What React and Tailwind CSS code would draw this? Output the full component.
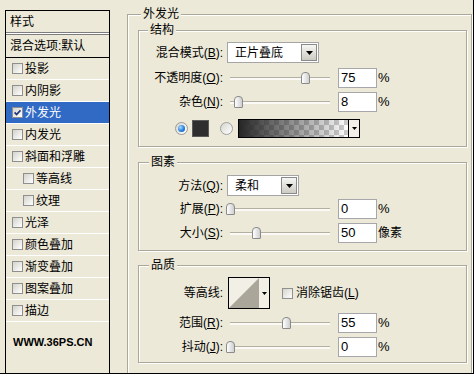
import React from "react";

function Cb({ checked }) {
  return (
    <span className="flex h-[11px] w-[11px] shrink-0 items-center justify-center border border-[#8f8f8f] bg-gradient-to-br from-[#d4d3cc] to-white">
      {checked ? (
        <svg width="7" height="7" viewBox="0 0 7 7">
          <path d="M0.6 3.4 L2.6 5.6 L6.5 1.2" fill="none" stroke="#22357a" strokeWidth="1.7" />
        </svg>
      ) : null}
    </span>
  );
}

function Tri({ w = 7, h = 4 }) {
  return (
    <svg width={w} height={h} viewBox={`0 0 ${w} ${h}`}>
      <polygon points={`0,0 ${w},0 ${w / 2},${h}`} fill="#000" />
    </svg>
  );
}

function Group({ title, className, titleClass, children }) {
  return (
    <div className={`relative border border-[#aca899] shadow-[inset_1px_1px_0_#fff,1px_1px_0_#fff] ${className}`}>
      <span className={`absolute -top-[8px] bg-[#ece9d8] px-[2px] text-[12px] leading-[14px] ${titleClass}`}>{title}</span>
      {children}
    </div>
  );
}

function Row({ label, className, children }) {
  return (
    <div className={`flex items-center ${className}`}>
      <span className="w-[84px] shrink-0 text-right text-[12px] leading-[14px]">{label}</span>
      {children}
    </div>
  );
}

function Slider({ pct }) {
  return (
    <div className="relative ml-[4px] h-[20px] w-[106px] shrink-0">
      <div className="absolute left-[3px] right-[3px] top-[9px] h-[3px] border-t border-[#b3b0a1] bg-[#fbfaf6]" />
      <div
        className="absolute top-[4px] h-[12px] w-[9px] rounded-t-[4px] rounded-b-[1px] border border-[#8a8a8a] bg-gradient-to-r from-white to-[#cfcfcf]"
        style={{ left: pct - 1 }}
      />
    </div>
  );
}

function Num({ v, unit }) {
  return (
    <>
      <div className="ml-[5px] flex h-[20px] w-[39px] shrink-0 items-center border border-[#a7a6aa] bg-white pl-[2px] text-[13px] leading-[14px]">
        {v}
      </div>
      <span className="ml-[1px] text-[13px] leading-[14px]">{unit}</span>
    </>
  );
}

function Select({ className, text }) {
  return (
    <div className={`ml-[4px] flex h-[21px] shrink-0 items-center justify-between border border-[#a5a5a5] bg-white ${className}`}>
      <span className="pl-[7px] text-[12px] leading-[14px]">{text}</span>
      <span className="mr-[1px] flex h-[17px] w-[16px] items-center justify-center border border-[#8a8a8a] bg-gradient-to-b from-[#f6f6f4] to-[#cdcbc2]">
        <Tri w={7} h={4} />
      </span>
    </div>
  );
}

const rows = [
  { t: "投影" },
  { t: "内阴影" },
  { t: "外发光", sel: true },
  { t: "内发光" },
  { t: "斜面和浮雕" },
  { t: "等高线", ind: true },
  { t: "纹理", ind: true },
  { t: "光泽" },
  { t: "颜色叠加" },
  { t: "渐变叠加" },
  { t: "图案叠加" },
  { t: "描边" },
];

export default function App() {
  return (
    <div className="flex h-[374px] w-[474px] overflow-hidden border-b border-r border-black bg-[#ece9d8] font-['Liberation_Sans','Noto_Sans_CJK_SC',sans-serif] text-black">
      {/* left list */}
      <div className="ml-[5px] mt-[10px] h-[380px] w-[105px] shrink-0 border border-black">
        <div className="flex h-[21px] items-center pl-[4px] text-[12px] leading-[14px]">样式</div>
        <div className="h-[3px] border-y border-[#7d7d7d] bg-white" />
        <div className="flex h-[23px] items-center border-b border-black pl-[4px] text-[12px] leading-[14px]">混合选项:默认</div>
        {rows.map((r) => (
          <div
            key={r.t}
            className={`flex h-[22px] items-center border-b border-white text-[12px] leading-[14px] ${r.ind ? "pl-[17px]" : "pl-[6px]"} ${r.sel ? "bg-[#316ac5] text-white" : ""}`}
          >
            <Cb checked={r.sel} />
            <span className="ml-[2px]">{r.t}</span>
          </div>
        ))}
        <div className="mt-[14px] pl-[7px] text-[11px] font-bold leading-[13px]">WWW.36PS.CN</div>
      </div>

      {/* right outer group */}
      <Group
        title="外发光"
        titleClass="left-[13px]"
        className="ml-[17px] mt-[14px] flex h-[400px] w-[345px] shrink-0 flex-col pl-[10px] pt-[15px]"
      >
        {/* 结构 */}
        <Group title="结构" titleClass="left-[9px]" className="flex h-[117px] w-[329px] flex-col">
          <Row label={<>混合模式(<u>B</u>):</>} className="mt-[11px] h-[21px]">
            <Select className="w-[92px]" text="正片叠底" />
          </Row>
          <Row label={<>不透明度(<u>O</u>):</>} className="mt-[5px] h-[20px]">
            <Slider pct={75} />
            <Num v="75" unit="%" />
          </Row>
          <Row label={<>杂色(<u>N</u>):</>} className="mt-[4px] h-[20px]">
            <Slider pct={8} />
            <Num v="8" unit="%" />
          </Row>
          <div className="mt-[7px] flex h-[19px] items-center">
            <span className="ml-[36px] flex h-[13px] w-[13px] items-center justify-center rounded-full border border-[#9a9a9a] bg-gradient-to-br from-[#d8d8d0] to-white">
              <span className="h-[7px] w-[7px] rounded-full bg-[radial-gradient(circle_at_35%_35%,#a6dcff,#2a7fdc_55%,#0b4ea6)]" />
            </span>
            <span className="ml-[4px] h-[17px] w-[17px] border border-[#5a5a5a] bg-[#2e2e2e]" />
            <span className="ml-[11px] h-[13px] w-[13px] rounded-full border border-[#a0a0a0] bg-gradient-to-br from-[#d6d6d0] to-white" />
            <div className="ml-[5px] flex h-[19px] w-[122px] border border-black">
              <div className="h-full w-[109px] bg-[image:repeating-conic-gradient(#cdcdcd_0_25%,#ffffff_0_50%)] bg-[length:10px_10px]">
                <div className="h-full w-full bg-gradient-to-r from-[#262626] to-transparent" />
              </div>
              <div className="flex flex-1 items-center justify-center border-l border-black bg-[#f2f0e8]">
                <Tri w={5} h={3} />
              </div>
            </div>
          </div>
        </Group>

        {/* 图素 */}
        <Group title="图素" titleClass="left-[10px]" className="mt-[15px] flex h-[89px] w-[329px] flex-col">
          <Row label={<>方法(<u>Q</u>):</>} className="mt-[12px] h-[21px]">
            <Select className="w-[72px]" text="柔和" />
          </Row>
          <Row label={<>扩展(<u>P</u>):</>} className="mt-[3px] h-[20px]">
            <Slider pct={0} />
            <Num v="0" unit="%" />
          </Row>
          <Row label={<>大小(<u>S</u>):</>} className="mt-[4px] h-[20px]">
            <Slider pct={26} />
            <Num v="50" unit={<span className="text-[12px]">像素</span>} />
          </Row>
        </Group>

        {/* 品质 */}
        <Group title="品质" titleClass="left-[10px]" className="mt-[14px] flex h-[98px] w-[329px] flex-col">
          <Row label="等高线:" className="mt-[11px] h-[32px]">
            <div className="ml-[5px] flex h-[32px] w-[42px] shrink-0 border border-black bg-[#f1efe6]">
              <svg width="30" height="30" viewBox="0 0 30 30" className="shrink-0">
                <polygon points="0,30 30,0 30,30" fill="#aaa69a" />
              </svg>
              <div className="flex flex-1 items-center justify-center">
                <Tri w={5} h={3} />
              </div>
            </div>
            <span className="ml-[12px]">
              <Cb />
            </span>
            <span className="ml-[3px] text-[12px] leading-[14px]">消除锯齿(<u>L</u>)</span>
          </Row>
          <Row label={<>范围(<u>R</u>):</>} className="mt-[4px] h-[20px]">
            <Slider pct={56} />
            <Num v="55" unit="%" />
          </Row>
          <Row label={<>抖动(<u>J</u>):</>} className="mt-[4px] h-[20px]">
            <Slider pct={0} />
            <Num v="0" unit="%" />
          </Row>
        </Group>
      </Group>
    </div>
  );
}
